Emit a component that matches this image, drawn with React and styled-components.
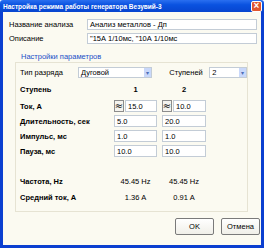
import styled, { createGlobalStyle } from "styled-components";

const Global = createGlobalStyle`
  body {
    margin: 0;
    font-family: "Liberation Sans", Arial, sans-serif;
  }
`;

function Select({ value, width }) {
    return (
        <Sel width={width}>
            <span>{value}</span>
            <Arrow>▾</Arrow>
        </Sel>
    )
}

function Cell({ value, approx }) {
    return (
        <CellBox>
            {approx && <Approx>≈</Approx>}
            <Field>{value}</Field>
        </CellBox>
    )
}

const rows = [
    { name: "Ток, А", a: "15.0", b: "10.0", approx: true },
    { name: "Длительность, сек", a: "5.0", b: "20.0" },
    { name: "Импульс, мс", a: "1.0", b: "1.0" },
    { name: "Пауза, мс", a: "10.0", b: "10.0" },
];

export default function App() {
    return (
        <>
            <Global />
            <Window>
                <TitleBar>
                    <span>Настройка режима работы генератора Везувий-3</span>
                    <Close>×</Close>
                </TitleBar>
                <Body>
                    <FormRow>
                        <Label>Название анализа</Label>
                        <Field>Анализ металлов - Дп</Field>
                    </FormRow>
                    <FormRow>
                        <Label>Описание</Label>
                        <Field>"15А 1/10мс, "10А 1/10мс</Field>
                    </FormRow>
                    <GroupLabel>Настройки параметров</GroupLabel>
                    <Group>
                        <TypeRow>
                            <Label w="58px">Тип разряда</Label>
                            <Select value="Дуговой" width="75px" />
                            <Label w="40px" ml="17px">Ступеней</Label>
                            <Select value="2" width="38px" />
                        </TypeRow>
                        <Grid>
                            <Bold>Ступень</Bold>
                            <Value bold>1</Value>
                            <Value bold>2</Value>
                        </Grid>
                        <Grid>
                            {rows.map(r => [
                                <Bold key={r.name + "l"}>{r.name}</Bold>,
                                <Cell key={r.name + "a"} value={r.a} approx={r.approx} />,
                                <Cell key={r.name + "b"} value={r.b} approx={r.approx} />,
                            ])}
                        </Grid>
                        <Grid results>
                            <Bold>Частота, Hz</Bold>
                            <Value>45.45 Hz</Value>
                            <Value>45.45 Hz</Value>
                            <Bold>Средний ток, А</Bold>
                            <Value>1.36 A</Value>
                            <Value>0.91 A</Value>
                        </Grid>
                    </Group>
                    <Buttons>
                        <Button>OK</Button>
                        <Button>Отмена</Button>
                    </Buttons>
                </Body>
            </Window>
        </>
    )
}

const Window = styled.div`
    width: 264px;
    height: 248px;
    display: flex;
    flex-direction: column;
    font-size: 7.5px;
    color: #000;
`;

const TitleBar = styled.div`
    height: 12px;
    flex-shrink: 0;
    background: linear-gradient(#2a6ff0, #0a52e0 40%, #0845cf);
    color: #fff;
    font-weight: 700;
    font-size: 6.5px;
    display: flex;
    align-items: center;
    justify-content: space-between;
    padding: 0 2px 0 3px;
    border-radius: 3px 3px 0 0;
`;

const Close = styled.div`
    width: 9px;
    height: 9px;
    background: #e2562f;
    border: 1px solid #fff;
    border-radius: 2px;
    color: #fff;
    font-size: 10px;
    line-height: 8px;
    text-align: center;
    font-weight: 700;
`;

const Body = styled.div`
    flex: 1;
    background: #fbfaf1;
    border: 3px solid #0b3fd0;
    border-top: 0;
    display: flex;
    flex-direction: column;
    padding: 7px 1px 0 6px;
`;

const FormRow = styled.div`
    display: flex;
    align-items: center;
    height: 11px;
    margin-bottom: 3px;
    margin-right: 3px;
`;

const Label = styled.div`
    width: ${p => p.w || "78px"};
    margin-left: ${p => p.ml || "0"};
    flex-shrink: 0;
    white-space: nowrap;
`;

const Field = styled.div`
    flex: 1;
    height: 100%;
    box-sizing: border-box;
    background: #fff;
    border: 1px solid #c3ccd6;
    padding: 0 2px;
    display: flex;
    align-items: center;
    white-space: nowrap;
    overflow: hidden;
`;

const GroupLabel = styled.div`
    color: #1a4fc8;
    margin: 5px 0 0 12px;
`;

const Group = styled.div`
    margin: 1px 12px 0 6px;
    border: 1px solid #e6e3d3;
    padding: 4px 0 8px 4px;
    display: flex;
    flex-direction: column;
`;

const TypeRow = styled.div`
    display: flex;
    align-items: center;
    height: 11px;
`;

const Sel = styled.div`
    width: ${p => p.width};
    height: 11px;
    box-sizing: border-box;
    background: #fff;
    border: 1px solid #c3ccd6;
    display: flex;
    align-items: center;
    justify-content: space-between;
    padding-left: 2px;
`;

const Arrow = styled.div`
    width: 7px;
    height: 100%;
    background: #c9d8fa;
    color: #4d6db8;
    font-size: 6px;
    display: flex;
    align-items: center;
    justify-content: center;
`;

const Grid = styled.div`
    display: grid;
    grid-template-columns: 89px 43px 44px;
    column-gap: 5px;
    grid-auto-rows: 12px;
    align-items: center;
    margin-top: ${p => p.results ? "18px" : "5px"};
    row-gap: ${p => p.results ? "4px" : "3px"};
`;

const Bold = styled.div`
    font-weight: 700;
    white-space: nowrap;
`;

const Value = styled.div`
    text-align: center;
    font-weight: ${p => p.bold ? 700 : 400};
    white-space: nowrap;
`;

const CellBox = styled.div`
    display: flex;
    height: 12px;
    gap: 1px;
`;

const Approx = styled.div`
    width: 10px;
    flex-shrink: 0;
    box-sizing: border-box;
    border: 1px solid #8c8c8c;
    background: #f4f3ee;
    font-family: "DejaVu Sans", sans-serif;
    font-size: 10px;
    line-height: 1;
    display: flex;
    align-items: center;
    justify-content: center;
`;

const Buttons = styled.div`
    display: flex;
    justify-content: flex-end;
    gap: 7px;
    margin-top: 6px;
`;

const Button = styled.div`
    width: 39px;
    height: 17px;
    box-sizing: border-box;
    border: 1px solid #7a7a7a;
    border-radius: 2px;
    background: linear-gradient(#ffffff, #f0efe8);
    display: flex;
    align-items: center;
    justify-content: center;
`;
